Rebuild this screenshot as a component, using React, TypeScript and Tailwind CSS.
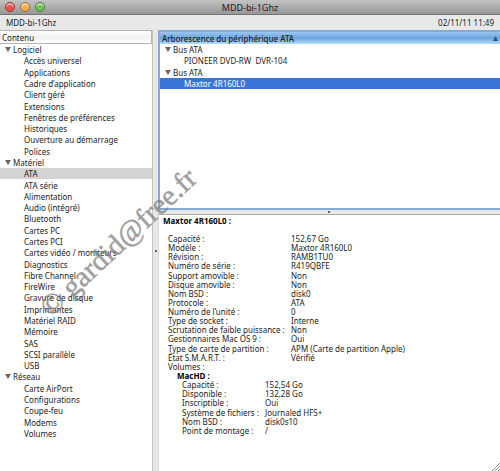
import { useState } from "react";

const sections = [
  {
    name: "Logiciel",
    items: [
      "Accès universel",
      "Applications",
      "Cadre d’application",
      "Client géré",
      "Extensions",
      "Fenêtres de préférences",
      "Historiques",
      "Ouverture au démarrage",
      "Polices",
    ],
  },
  {
    name: "Matériel",
    items: [
      "ATA",
      "ATA série",
      "Alimentation",
      "Audio (intégré)",
      "Bluetooth",
      "Cartes PC",
      "Cartes PCI",
      "Cartes vidéo / moniteurs",
      "Diagnostics",
      "Fibre Channel",
      "FireWire",
      "Gravure de disque",
      "Imprimantes",
      "Matériel RAID",
      "Mémoire",
      "SAS",
      "SCSI parallèle",
      "USB",
    ],
  },
  {
    name: "Réseau",
    items: ["Carte AirPort", "Configurations", "Coupe-feu", "Modems", "Volumes"],
  },
];

const device: [string, string][] = [
  ["Capacité :", "152,67 Go"],
  ["Modèle :", "Maxtor 4R160L0"],
  ["Révision :", "RAMB1TU0"],
  ["Numéro de série :", "R419QBFE"],
  ["Support amovible :", "Non"],
  ["Disque amovible :", "Non"],
  ["Nom BSD :", "disk0"],
  ["Protocole :", "ATA"],
  ["Numéro de l’unité :", "0"],
  ["Type de socket :", "Interne"],
  ["Scrutation de faible puissance :", "Non"],
  ["Gestionnaires Mac OS 9 :", "Oui"],
  ["Type de carte de partition :", "APM (Carte de partition Apple)"],
  ["État S.M.A.R.T. :", "Vérifié"],
  ["Volumes :", ""],
];

const volume: [string, string][] = [
  ["Capacité :", "152,54 Go"],
  ["Disponible :", "132,28 Go"],
  ["Inscriptible :", "Oui"],
  ["Système de fichiers :", "Journaled HFS+"],
  ["Nom BSD :", "disk0s10"],
  ["Point de montage :", "/"],
];

function Triangle() {
  return (
    <svg viewBox="0 0 6 5" className="h-[5px] w-[6px] shrink-0" fill="#666" aria-hidden="true">
      <path d="M0 0H6L3 5Z" />
    </svg>
  );
}

function Light({ tone, label }: { tone: string; label: string }) {
  return (
    <button
      type="button"
      aria-label={label}
      className={`h-[10px] w-[10px] rounded-full border ${tone} shadow-[inset_0_2px_1px_rgba(255,255,255,0.6)]`}
    />
  );
}

function Rows({ rows, labelWidth }: { rows: [string, string][]; labelWidth: string }) {
  return (
    <tbody>
      {rows.map(([label, value]) => (
        <tr key={label}>
          <th scope="row" className={`${labelWidth} p-0 text-left font-normal`}>
            {label}
          </th>
          <td className="p-0">{value}</td>
        </tr>
      ))}
    </tbody>
  );
}

export default function App() {
  const [selected, setSelected] = useState("ATA");
  return (
    <div className="relative flex min-h-screen flex-col overflow-hidden bg-[#e8e8e8] font-['Noto_Sans','Liberation_Sans',sans-serif] text-[8px] leading-[9px] whitespace-nowrap text-[#1c1c1c]">
      <header className="grid h-[15px] grid-cols-3 items-center border-b border-[#757575] bg-linear-to-b from-[#c4c4c4] to-[#969696] px-[5px]">
        <div className="flex gap-[5px]">
          <Light label="Fermer" tone="border-[#9c2c2a] bg-[#ee514d]" />
          <Light label="Réduire" tone="border-[#a96a27] bg-[#f5ae4e]" />
          <Light label="Agrandir" tone="border-[#3f7a2b] bg-[#74bf55]" />
        </div>
        <h1 className="text-center text-[9px]">MDD-bi-1Ghz</h1>
      </header>

      <div className="flex h-[15px] items-center justify-between px-[6px]">
        <span>MDD-bi-1Ghz</span>
        <time>02/11/11 11:49</time>
      </div>

      <main className="flex flex-1">
        <nav className="w-[152px] shrink-0 bg-white">
          <div className="flex h-[14px] items-center border-y border-r border-[#b4b4b4] bg-linear-to-b from-white via-[#f0f0f0] to-white px-[2px]">
            Contenu
          </div>
          <ul className="grid h-[395px] auto-rows-fr">
            {sections.flatMap((section) => [
              <li key={section.name} className="flex items-center gap-[2px] pl-[5px]">
                <Triangle />
                {section.name}
              </li>,
              ...section.items.map((item) => (
                <li key={section.name + item} className="flex">
                  <button
                    type="button"
                    onClick={() => setSelected(item)}
                    className={`w-full pl-6 text-left ${item === selected ? "bg-[#d4d4d4]" : ""}`}
                  >
                    {item}
                  </button>
                </li>
              )),
            ])}
          </ul>
        </nav>

        <div className="flex w-[6px] shrink-0 items-center justify-center border-l border-[#c4c4c4]">
          <span className="h-[2px] w-[2px] rounded-full bg-[#333]" />
        </div>

        <div className="flex min-w-0 flex-1 flex-col">
          <section className="h-[180px] border-2 border-r-0 border-[#86aad6] bg-white">
            <button
              type="button"
              className="flex h-[12px] w-full items-center justify-between bg-linear-to-b from-[#9cc6f0] via-[#69a5e2] to-[#b4dcfb] px-[2px] font-medium"
            >
              Arborescence du périphérique ATA
              <svg viewBox="0 0 5 5" className="h-[5px] w-[5px]" fill="#33527c" aria-hidden="true">
                <path d="M0 5H5L2.500 0Z" />
              </svg>
            </button>
            <ul className="grid h-[45px] auto-rows-fr">
              <li className="flex items-center gap-[2px] pl-[5px]">
                <Triangle />
                Bus ATA
              </li>
              <li className="flex items-center pl-6">PIONEER DVD-RW&nbsp; DVR-104</li>
              <li className="flex items-center gap-[2px] pl-[5px]">
                <Triangle />
                Bus ATA
              </li>
              <li className="flex items-center bg-[#3875d7] pl-6 text-white">Maxtor 4R160L0</li>
            </ul>
          </section>

          <div className="flex h-[5px] items-center justify-center border-b border-[#a8a8a8]">
            <span className="h-[2px] w-[2px] rounded-full bg-[#333]" />
          </div>

          <section className="relative flex-1 border-l border-[#d8d8d8] bg-white pl-1">
            <h2 className="pt-[1px] font-bold text-black">Maxtor 4R160L0 :</h2>
            <table className="mt-[9px] ml-[5px] h-[137px] border-collapse">
              <Rows rows={device} labelWidth="w-[123px]" />
            </table>
            <h3 className="ml-[14px] font-bold text-black">MacHD :</h3>
            <table className="ml-[19px] h-[55px] border-collapse">
              <Rows rows={volume} labelWidth="w-[83px]" />
            </table>
            <svg
              viewBox="0 0 8 8"
              className="absolute right-0 bottom-0 h-2 w-2"
              stroke="#8c8c8c"
              aria-hidden="true"
            >
              <path d="M0 8L8 0M3 8L8 3M6 8L8 6" />
            </svg>
          </section>
        </div>
      </main>

      <div className="pointer-events-none absolute top-[226px] left-[8px] w-[220px] -rotate-43 text-center font-['Liberation_Serif',serif] text-[29px] leading-[32px] text-[#777]/70 [-webkit-text-stroke:1px_#8886]">
        © gardid@free.fr
      </div>
    </div>
  );
}
